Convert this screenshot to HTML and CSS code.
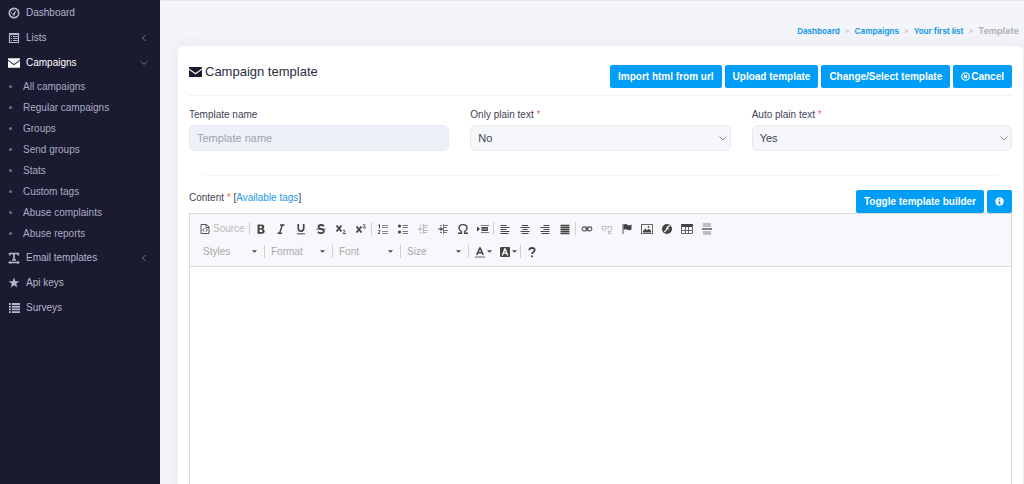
FILE: index.html
```html
<!DOCTYPE html>
<html lang="en">
<head>
<meta charset="utf-8">
<title>Campaign template</title>
<link rel="stylesheet" href="styles.css">
</head>
<body>
<svg class="defs" aria-hidden="true">
  <symbol id="mail" viewBox="0 0 14 12"><path fill="currentColor" d="M.6.6h12.800q.6 0 .6.6v.9L7 7.200 0 2.100v-.9Q0 .6.6.6zM0 3.500l7 5.100 7-5.100v7.300q0 .6-.6.6H.6q-.6 0-.6-.6z"/></symbol>
  <symbol id="chev-left" viewBox="0 0 8 8"><path d="M5.500 1 2.500 4l3 3" fill="none" stroke="currentColor"/></symbol>
  <symbol id="caret" viewBox="0 0 5 3"><path d="M0 .3h5L2.500 2.800z" fill="currentColor"/></symbol>
</svg>
<div class="app">
  <nav class="sidebar" aria-label="Main">
    <ul class="menu">
      <li><a href="#" class="menu-link"><svg class="menu-icon" viewBox="0 0 12 12"><circle cx="6" cy="6" r="4.700" fill="none" stroke="currentColor" stroke-width="1.700"/><path d="M5.800 7.200 8 4" stroke="currentColor" stroke-width="1.300"/><circle cx="5.700" cy="7.200" r="1.200" fill="currentColor"/><path d="M3 5.500h1M4.500 3.500h1" stroke="currentColor"/></svg><span>Dashboard</span></a></li>
      <li><a href="#" class="menu-link"><svg class="menu-icon" viewBox="0 0 12 12"><path fill="none" stroke="currentColor" stroke-width="1.200" d="M1.500 1.500h9v9h-9zM1.500 2.500h9M3 4.500h1M5 4.500h4.500M3 6.500h1M5 6.500h4.500M3 8.500h1M5 8.500h4.500"/></svg><span>Lists</span><svg class="chev"><use href="#chev-left"/></svg></a></li>
      <li><a href="#" class="menu-link active"><svg class="menu-icon"><use href="#mail"/></svg><span>Campaigns</span><svg class="chev" viewBox="0 0 8 8"><path d="m1 2.500 3 3 3-3" fill="none" stroke="currentColor"/></svg></a>
        <ul class="submenu">
          <li><a href="#">All campaigns</a></li>
          <li><a href="#">Regular campaigns</a></li>
          <li><a href="#">Groups</a></li>
          <li><a href="#">Send groups</a></li>
          <li><a href="#">Stats</a></li>
          <li><a href="#">Custom tags</a></li>
          <li><a href="#">Abuse complaints</a></li>
          <li><a href="#">Abuse reports</a></li>
        </ul></li>
      <li><a href="#" class="menu-link"><svg class="menu-icon" viewBox="0 0 12 12"><path fill="none" stroke="currentColor" stroke-width="1.700" d="M6 1.500V8M1.700 3.400V1.500h8.600v1.900M4 8h4"/><path fill="none" stroke="currentColor" stroke-width="1.300" d="M1.500 10.500h9M2.500 9.300 1.200 10.500l1.300 1.200M9.500 9.300l1.300 1.200-1.300 1.200"/></svg><span>Email templates</span><svg class="chev"><use href="#chev-left"/></svg></a></li>
      <li><a href="#" class="menu-link"><svg class="menu-icon" viewBox="0 0 12 12"><path fill="currentColor" d="m6 .5 1.400 3.800h3.900L8.200 6.700l1.100 3.900L6 8.300l-3.300 2.300 1.100-3.900L.7 4.300h3.900z"/></svg><span>Api keys</span></a></li>
      <li><a href="#" class="menu-link"><svg class="menu-icon" viewBox="0 0 12 12"><path fill="none" stroke="currentColor" stroke-width="1.900" d="M1 2h1.800M3.800 2H12M1 4.700h1.800M3.800 4.700H12M1 7.400h1.800M3.800 7.400H12M1 10.100h1.800M3.800 10.100H12"/></svg><span>Surveys</span></a></li>
    </ul>
  </nav>
  <main class="main">
    <nav class="crumbs" aria-label="Breadcrumb">
      <a href="#">Dashboard</a><i>&gt;</i><a href="#">Campaigns</a><i>&gt;</i><a href="#">Your first list</a><i>&gt;</i><span>Template</span>
    </nav>
    <section class="card">
      <header class="card-head">
        <h1><svg class="title-icon"><use href="#mail"/></svg>Campaign template</h1>
        <div class="actions">
          <button class="btn" type="button">Import html from url</button>
          <button class="btn" type="button">Upload template</button>
          <button class="btn" type="button">Change/Select template</button>
          <button class="btn" type="button"><svg class="btn-icon" viewBox="0 0 10 10"><circle cx="5" cy="5" r="4.200" fill="none" stroke="currentColor" stroke-width="1.200"/><path d="m3.300 3.300 3.400 3.400m0-3.400L3.300 6.700" stroke="currentColor" stroke-width="1.500"/></svg>Cancel</button>
        </div>
      </header>
      <form class="fields">
        <div class="field"><label for="name">Template name</label><input id="name" class="control" type="text" placeholder="Template name"></div>
        <div class="field"><label for="plain">Only plain text <b>*</b></label><div class="pick"><select id="plain" class="control"><option>No</option><option>Yes</option></select><svg class="pick-icon" viewBox="0 0 8 5"><path d="m.5.5 3.500 3.500L7.500.5" fill="none" stroke="currentColor"/></svg></div></div>
        <div class="field"><label for="auto">Auto plain text <b>*</b></label><div class="pick"><select id="auto" class="control"><option>Yes</option><option>No</option></select><svg class="pick-icon" viewBox="0 0 8 5"><path d="m.5.5 3.500 3.500L7.500.5" fill="none" stroke="currentColor"/></svg></div></div>
      </form>
      <hr class="rule">
      <div class="content-head">
        <div class="content-label"><label for="content">Content <b>*</b></label> [<a href="#">Available tags</a>]</div>
        <div class="actions">
          <button class="btn" type="button">Toggle template builder</button>
          <button class="btn" type="button" aria-label="Info"><svg class="btn-icon" viewBox="0 0 10 10"><circle cx="5" cy="5" r="4.700" fill="currentColor"/><path d="M4.300 2h1.500v1.300H4.300zM3.700 4.200h2.100v2.900h.7V8H3.600v-.9h.7v-2h-.6z" fill="#009ef7"/></svg></button>
        </div>
      </div>
      <div class="editor">
        <div class="toolbar">
          <div class="tools">
            <button class="tool source" type="button" disabled><svg viewBox="0 0 12 12"><path d="M2 1.500h5.500l2.500 2.500v6.500H2zM7 1.500v3h3" fill="none" stroke="#555"/><path d="M5 5.500 3.800 7 5 8.500M7 5.500 8.200 7 7 8.500" fill="none" stroke="#444"/></svg>Source</button>
            <span class="sep"></span>
            <button class="tool" type="button" aria-label="Bold"><svg viewBox="0 0 12 12"><path fill-rule="evenodd" fill="currentColor" d="M2.500 1.500h4q2.800 0 2.800 2.400 0 1.500-1.300 2 1.700.4 1.700 2.200 0 2.600-3 2.600H2.500zM4.600 3v2.200h1.300q1.200 0 1.200-1.100T5.900 3zm0 3.600v2.500h1.500q1.300 0 1.300-1.200T6.100 6.600z"/></svg></button>
            <button class="tool" type="button" aria-label="Italic"><svg viewBox="0 0 12 12"><path d="M5 2h4.500M2.500 10.200H7M7.400 2 4.600 10" fill="none" stroke="currentColor" stroke-width="1.400"/></svg></button>
            <button class="tool" type="button" aria-label="Underline"><svg viewBox="0 0 12 12"><path d="M3.300 1v4.300q0 2.900 2.700 2.900t2.700-2.900V1" fill="none" stroke="currentColor" stroke-width="1.700"/><path d="M2 10.800h8" stroke="currentColor"/></svg></button>
            <button class="tool" type="button" aria-label="Strikethrough"><svg viewBox="0 0 12 12"><path d="M9 3Q7.800 2 6 2 3.500 2 3.500 3.900c0 2.500 5.300 1.500 5.300 4.200 0 2.700-4.300 2.300-6 .9" fill="none" stroke="currentColor" stroke-width="1.800"/><path d="M1.500 6.200h9" stroke="currentColor"/></svg></button>
            <button class="tool" type="button" aria-label="Subscript"><svg viewBox="0 0 12 12"><path d="m1.500 2.500 5 6m0-6-5 6" stroke="currentColor" stroke-width="1.900"/><path d="M8 7.500q2.500-.7 2 .8l-2 2.200h3" fill="none" stroke="currentColor" stroke-width=".9"/></svg></button>
            <button class="tool" type="button" aria-label="Superscript"><svg viewBox="0 0 12 12"><path d="m1.500 3.500 5 6m0-6-5 6" stroke="currentColor" stroke-width="1.900"/><path d="M8 1.800q2.500-.7 2 .8L8 4.800h3" fill="none" stroke="currentColor" stroke-width=".9"/></svg></button>
            <span class="sep"></span>
            <button class="tool" type="button" aria-label="Numbered list"><svg viewBox="0 0 12 12"><path d="M5 2.500h6M5 4.500h6M5 8.500h6M5 10.500h6" stroke="#888"/><path d="m1.500 2 1-.5v3.800M1.200 7.500h1.500v1.200L1.200 10.500H3" fill="none" stroke="#444"/></svg></button>
            <button class="tool" type="button" aria-label="Bulleted list"><svg viewBox="0 0 12 12"><circle cx="2.500" cy="3" r="1.600" fill="#444"/><circle cx="2.500" cy="9" r="1.600" fill="#444"/><path d="M5.500 2.500H11M5.500 4.500H11M5.500 8.500H11M5.500 10.500H11" stroke="#777"/></svg></button>
            <button class="tool" type="button" aria-label="Decrease indent" disabled><svg viewBox="0 0 12 12"><path d="M6.500 1v10M7 2.500h4M7 4.500h3M7 7.500h4M7 9.500h3M3 2.500h2M3 9.500h2" stroke="currentColor"/><path d="m1 6 2.500-2.500v2H6v1H3.500v2z" fill="currentColor"/></svg></button>
            <button class="tool" type="button" aria-label="Increase indent"><svg viewBox="0 0 12 12"><path d="M6.500 1v10M7 2.500h4M7 4.500h3M7 7.500h4M7 9.500h3M3 2.500h2M3 9.500h2" stroke="#777"/><path d="M1 5.500h2.500v-2L6 6 3.500 8.500v-2H1z" fill="#444"/></svg></button>
            <button class="tool" type="button" aria-label="Special character"><svg viewBox="0 0 12 12"><path d="M1 10.200h3.400V8.600Q2 7.400 2 5 2 1.600 6 1.600T10 5q0 2.400-2.400 3.600v1.600H11" fill="none" stroke="currentColor" stroke-width="1.400"/></svg></button>
            <button class="tool" type="button" aria-label="Page break"><svg viewBox="0 0 12 12"><path d="m0 3.500 3 2.500-3 2.500zM4.500 4H11v4H4.500z" fill="currentColor"/><path d="M4 2.500h8M4 9.500h8" stroke="#777"/><path d="M5.500 6h5" stroke="#bbb"/></svg></button>
            <span class="sep"></span>
            <button class="tool" type="button" aria-label="Align left"><svg viewBox="0 0 12 12"><path d="M1.500 2.500h6M1.500 4.500h9M1.500 6.500h6M1.500 8.500h9M1.500 10.500h8" stroke="currentColor" stroke-width="1.200"/></svg></button>
            <button class="tool" type="button" aria-label="Center"><svg viewBox="0 0 12 12"><path d="M3 2.500h6M1.500 4.500h9M3.500 6.500h5M1.500 8.500h9M2.500 10.500h7" stroke="currentColor" stroke-width="1.200"/></svg></button>
            <button class="tool" type="button" aria-label="Align right"><svg viewBox="0 0 12 12"><path d="M4.500 2.500h6M1.500 4.500h9M4.500 6.500h6M1.500 8.500h9M2.500 10.500h8" stroke="currentColor" stroke-width="1.200"/></svg></button>
            <button class="tool" type="button" aria-label="Justify"><svg viewBox="0 0 12 12"><path d="M1.500 2.500h9M1.500 4.500h9M1.500 6.500h9M1.500 8.500h9M1.500 10.500h9" stroke="currentColor" stroke-width="1.300"/></svg></button>
            <span class="sep"></span>
            <button class="tool" type="button" aria-label="Link"><svg viewBox="0 0 12 12"><rect x="1.200" y="4" width="5" height="3.800" rx="1.700" fill="none" stroke="#666" stroke-width="1.300"/><rect x="5.800" y="4" width="5" height="3.800" rx="1.700" fill="none" stroke="#666" stroke-width="1.300"/><path d="M4 5.900h4" stroke="#444"/></svg></button>
            <button class="tool" type="button" aria-label="Unlink" disabled><svg viewBox="0 0 12 12"><path d="M5.500 3.500h-3q-1.300 0-1.300 1.700T2.500 7H5M6.500 3.500h3q1.300 0 1.300 1.700T9.500 7M4 5.200h4M7 8l3 3m0-3-3 3" fill="none" stroke="currentColor" stroke-width="1.100"/></svg></button>
            <button class="tool" type="button" aria-label="Anchor"><svg viewBox="0 0 12 12"><path d="M2 1v10" stroke="#777" stroke-width="1.200"/><path d="M2.500 1.500q2-1 4 .2t4-.2v5q-2 1.200-4 .2t-4 .3z" fill="currentColor"/></svg></button>
            <button class="tool" type="button" aria-label="Image"><svg viewBox="0 0 12 12"><rect x=".5" y="1.500" width="11" height="9" fill="none" stroke="#666"/><path d="M2 9.500V8l2.300-2.500L6 7.300l2-1.500 2 2v1.700z" fill="#444"/><circle cx="7.500" cy="4" r="1" fill="#555"/></svg></button>
            <button class="tool" type="button" aria-label="Flash"><svg viewBox="0 0 12 12"><circle cx="6" cy="6" r="5" fill="currentColor"/><path d="M9 2.800Q6.700 2.800 6 5.200T3.300 9M5.300 5.900h2.500" fill="none" stroke="#fff" stroke-width="1.200"/></svg></button>
            <button class="tool" type="button" aria-label="Table"><svg viewBox="0 0 12 12"><path d="M0 1h12v3H0z" fill="currentColor"/><path d="M.5 2v8.500h11V2M1 7.500h10M4.500 4v6.500M7.500 4v6.500" fill="none" stroke="#666"/></svg></button>
            <button class="tool" type="button" aria-label="Horizontal line"><svg viewBox="0 0 12 12"><path d="M2 1h8M2 3h8M2 9h8M2 11h8" stroke="#aaa" stroke-width="1.300"/><path d="M1 6h10" stroke="#444" stroke-width="1.300"/></svg></button>
          </div>
          <div class="tools">
            <button class="combo" type="button">Styles<svg class="caret"><use href="#caret"/></svg></button><span class="sep"></span>
            <button class="combo" type="button">Format<svg class="caret"><use href="#caret"/></svg></button><span class="sep"></span>
            <button class="combo" type="button">Font<svg class="caret"><use href="#caret"/></svg></button><span class="sep"></span>
            <button class="combo" type="button">Size<svg class="caret"><use href="#caret"/></svg></button><span class="sep"></span>
            <button class="tool wide" type="button" aria-label="Text color"><svg viewBox="0 0 12 12"><path d="m2.800 9 3-7h.4l3 7M4 6.700h4" fill="none" stroke="currentColor" stroke-width="1.600"/><path d="M1 11h10" stroke="#888" stroke-width="1.300"/></svg><svg class="caret"><use href="#caret"/></svg></button>
            <button class="tool wide" type="button" aria-label="Background color"><svg viewBox="0 0 12 12"><rect x="1" y="1" width="10" height="10" rx="1" fill="currentColor"/><path d="m3.300 9.500 2.500-6.500h.4l2.500 6.500M4.500 7.200h3" fill="none" stroke="#fff" stroke-width="1.300"/></svg><svg class="caret"><use href="#caret"/></svg></button>
            <span class="sep"></span>
            <button class="tool" type="button" aria-label="About"><svg viewBox="0 0 12 12"><path d="M3.300 4.200Q3.300 2 6 2t2.700 2.100q0 1.200-1.300 1.900Q6 6.700 6 8" fill="none" stroke="currentColor" stroke-width="1.800"/><circle cx="6" cy="10.300" r="1.100" fill="currentColor"/></svg></button>
          </div>
        </div>
        <textarea id="content" class="editor-area"></textarea>
      </div>
    </section>
  </main>
</div>
</body>
</html>
```
FILE: styles.css
```css
* { box-sizing: border-box; }
body {
  margin: 0;
  font: 10px/16px "Liberation Sans", Arial, sans-serif;
  color: #3f4254;
  background: #f3f5f9;
}
a { color: #1c9bea; text-decoration: none; }
button, input, select, textarea { font: inherit; color: inherit; }
b { color: #f1705c; font-weight: 400; }
ul { list-style: none; margin: 0; padding: 0; }
.defs { position: absolute; width: 0; height: 0; }
.app { display: flex; height: 100vh; overflow: hidden; }

.sidebar { flex: 0 0 160px; background: #1a1a31; }
.menu-link {
  display: flex;
  align-items: center;
  gap: 6px;
  height: 25px;
  padding: 0 12px 0 8px;
  color: #b4b6ca;
}
.menu-link.active { color: #fff; }
.menu-icon { width: 12px; height: 12px; }
.chev { width: 8px; height: 8px; margin-left: auto; color: #777b99; }
.submenu { padding: 1px 0; }
.submenu a {
  display: flex;
  align-items: center;
  gap: 11px;
  height: 21px;
  padding-left: 9px;
  color: #a9abc0;
}
.submenu a::before { content: ""; width: 3px; height: 3px; border-radius: 50%; background: #6c6f8c; }

.main {
  flex: 1;
  min-width: 0;
  display: flex;
  flex-direction: column;
  padding: 0 1px 0 18px;
  border-top: 1px solid #e9eaee;
}
.crumbs {
  display: flex;
  justify-content: flex-end;
  align-items: center;
  gap: 5px;
  padding: 22px 4px 7px;
  font: 700 8px/16px Inter, sans-serif;
}
.crumbs i { font-style: normal; font-size: 7px; color: #c4c7d0; }
.crumbs span { font-size: 9px; color: #b1b3ba; }
.card {
  flex: 1;
  display: flex;
  flex-direction: column;
  padding: 13px 11px 0;
  background: #fff;
  border-radius: 6px 6px 0 0;
  box-shadow: 0 0 16px rgba(60, 65, 90, .09);
}
.card-head {
  display: flex;
  justify-content: space-between;
  align-items: center;
  height: 37px;
  padding-bottom: 2px;
  border-bottom: 1px solid #f0f1f5;
}
h1 { display: flex; align-items: center; gap: 3px; margin: 0; font-size: 13px; font-weight: 400; line-height: 16px; }
.card-head h1 { margin-bottom: 8px; color: #2b2d40; }
.title-icon { width: 13px; height: 12px; color: #1a1a31; }
.card-head .actions { padding-top: 1px; }
.actions { display: flex; gap: 3px; }
.btn {
  display: flex;
  align-items: center;
  gap: 1px;
  height: 23px;
  padding: 0 8px;
  border: 0;
  border-radius: 2px;
  background: #009ef7;
  color: #fff;
  font-weight: 700;
  white-space: nowrap;
}
.btn-icon { width: 9px; height: 9px; }
.fields { display: grid; grid-template-columns: repeat(3, 1fr); column-gap: 21px; padding-top: 11px; }
.field label { display: block; margin-bottom: 2px; }
.control {
  display: block;
  width: 100%;
  height: 26px;
  padding: 0 7px;
  border: 1px solid #e6e9ef;
  border-radius: 6px;
  background: #f5f7fa;
  font-size: 11px;
  appearance: none;
  outline: 0;
}
input.control { background: #edf1f7; }
.control::placeholder { color: #9da1b2; opacity: 1; }
.pick { display: grid; align-items: center; }
.pick > * { grid-area: 1 / 1; }
.pick-icon { width: 8px; height: 5px; justify-self: end; margin-right: 4px; color: #8a8d99; pointer-events: none; }
.rule { width: calc(100% - 30px); margin: 24px auto 14px; border: 0; border-top: 1px solid #f3f4f7; }
.content-head { display: flex; justify-content: space-between; }

.editor { flex: 1; display: flex; flex-direction: column; border: 1px solid #d8d9dd; border-bottom: 0; }
.toolbar { padding: 3px 8px; background: #f8f7fb; border-bottom: 1px solid #d8d9dd; }
.tools { display: flex; align-items: center; height: 23px; }
.tool, .combo {
  display: flex;
  align-items: center;
  justify-content: center;
  width: 20px;
  height: 20px;
  padding: 0;
  border: 0;
  background: none;
  color: #444;
}
.tool svg:first-child { width: 12px; height: 12px; }
.tool:disabled { color: #bbb; }
.source { width: 51px; gap: 2px; justify-content: flex-start; padding-left: 1px; }
.sep { width: 1px; height: 13px; margin-right: 1px; background: #cfcfd3; }
.combo { width: 66px; padding: 0 7px 0 5px; justify-content: space-between; color: #aaa; }
.tool .caret, .combo .caret { width: 5px; height: 3px; color: #444; }
.wide { width: 25px; gap: 1px; }
.editor-area { flex: 1; width: 100%; padding: 8px; border: 0; outline: 0; resize: none; background: #fff; }
```
